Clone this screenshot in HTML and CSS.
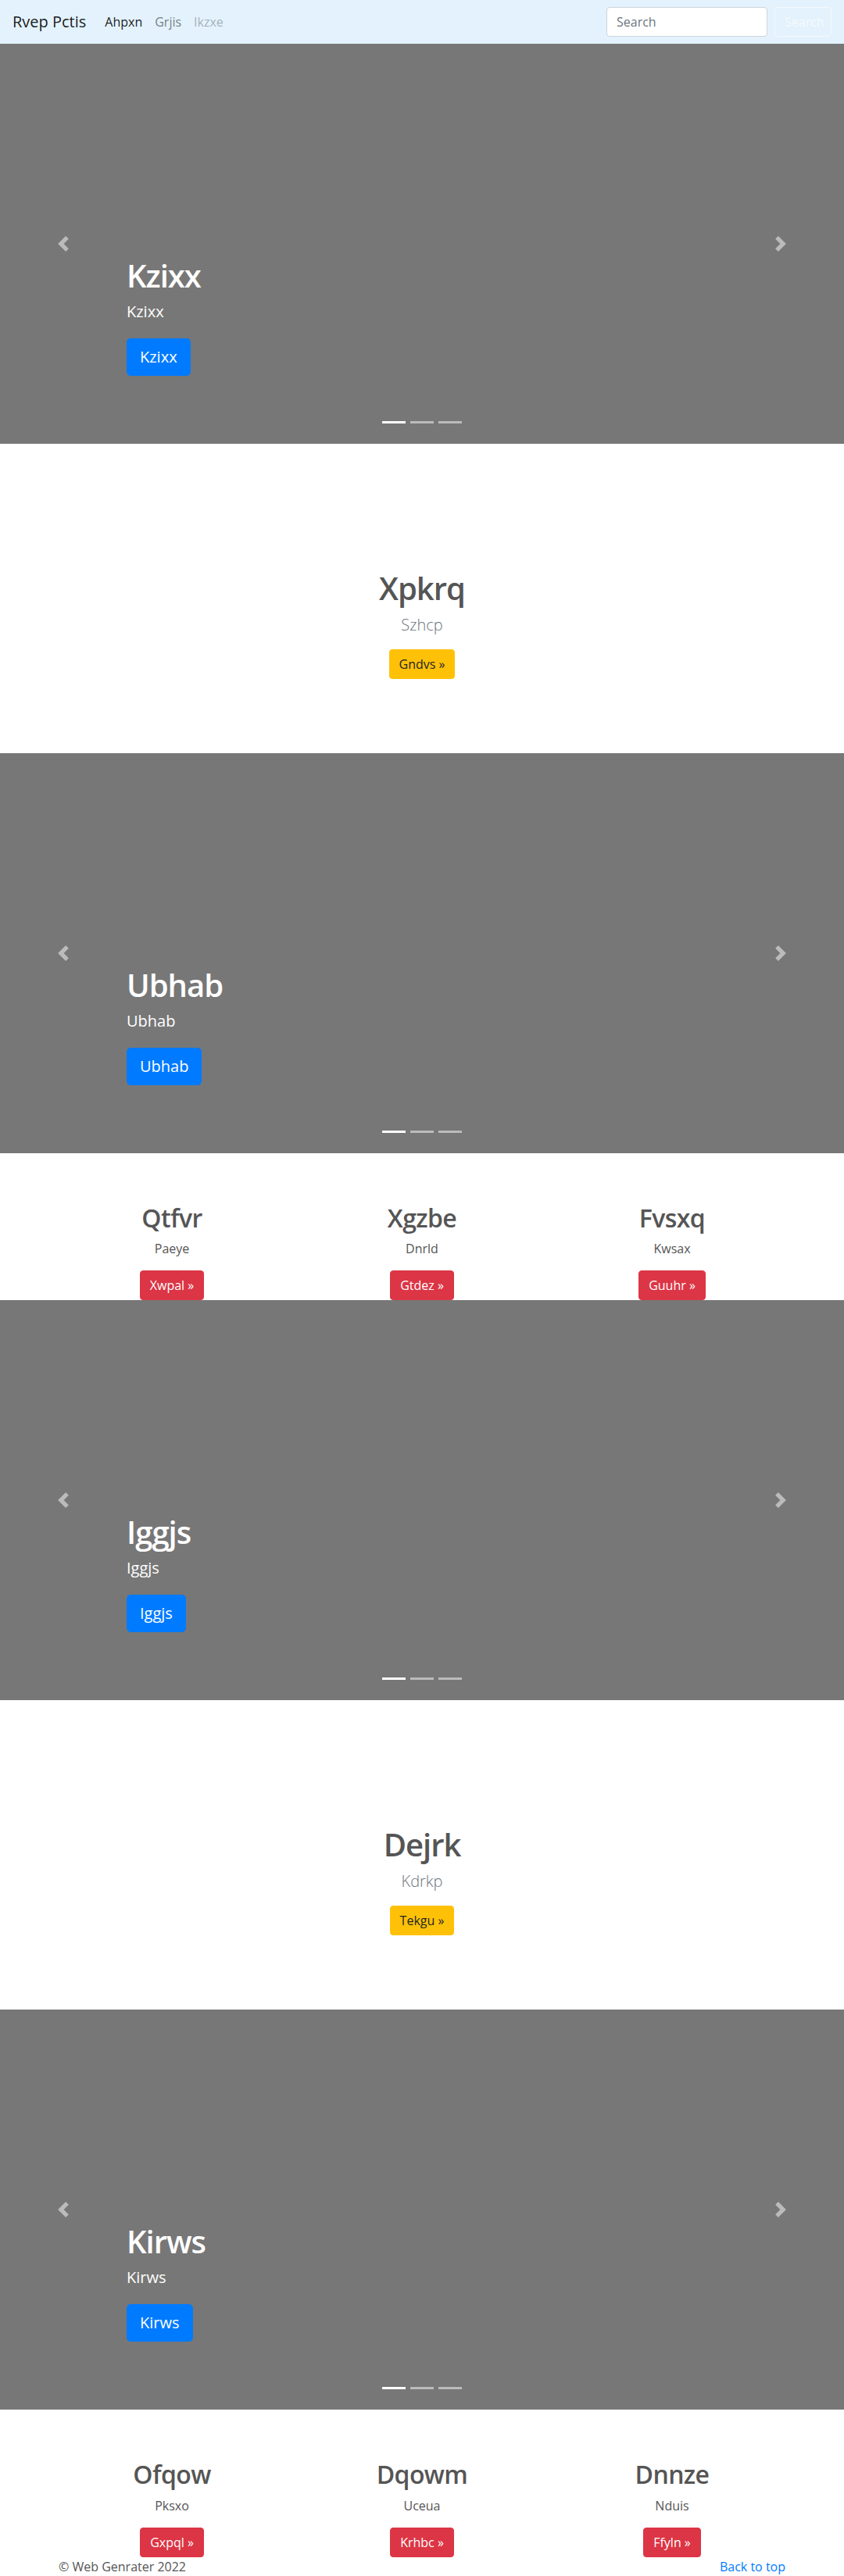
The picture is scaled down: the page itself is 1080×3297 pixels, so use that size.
FILE: index.html
```html
<!DOCTYPE html>
<html lang="en">
<head>
<meta charset="utf-8">
<title>Rvep Pctis</title>
<link rel="stylesheet" href="styles.css">
</head>
<body>
<header class="navbar">
  <a class="brand" href="#">Rvep Pctis</a>
  <ul class="nav">
    <li><a class="nav-link active" href="#">Ahpxn</a></li>
    <li><a class="nav-link" href="#">Grjis</a></li>
    <li><a class="nav-link disabled" href="#">Ikzxe</a></li>
  </ul>
  <form class="search">
    <input type="text" placeholder="Search">
    <button type="button">Search</button>
  </form>
</header>

<main>
  <section class="carousel">
    <div class="caption">
      <h1>Kzixx</h1>
      <p>Kzixx</p>
      <p class="cta"><a class="btn btn-lg btn-primary" href="#">Kzixx</a></p>
    </div>
    <ol class="indicators"><li class="active"></li><li></li><li></li></ol>
    <a class="ctrl prev" href="#"><svg viewBox="0 0 8 8" width="20" height="20"><path d="M5.25 0l-4 4 4 4 1.5-1.5L4.25 4l2.5-2.5L5.25 0z"/></svg></a>
    <a class="ctrl next" href="#"><svg viewBox="0 0 8 8" width="20" height="20"><path d="M2.75 0l-1.5 1.5L3.75 4l-2.5 2.5L2.75 8l4-4-4-4z"/></svg></a>
  </section>

  <section class="feature">
    <h1>Xpkrq</h1>
    <p class="lead">Szhcp</p>
    <p class="cta"><a class="btn btn-warning" href="#">Gndvs &raquo;</a></p>
  </section>

  <section class="carousel">
    <div class="caption">
      <h1>Ubhab</h1>
      <p>Ubhab</p>
      <p class="cta"><a class="btn btn-lg btn-primary" href="#">Ubhab</a></p>
    </div>
    <ol class="indicators"><li class="active"></li><li></li><li></li></ol>
    <a class="ctrl prev" href="#"><svg viewBox="0 0 8 8" width="20" height="20"><path d="M5.25 0l-4 4 4 4 1.5-1.5L4.25 4l2.5-2.5L5.25 0z"/></svg></a>
    <a class="ctrl next" href="#"><svg viewBox="0 0 8 8" width="20" height="20"><path d="M2.75 0l-1.5 1.5L3.75 4l-2.5 2.5L2.75 8l4-4-4-4z"/></svg></a>
  </section>

  <section class="columns">
    <div class="col">
      <h2>Qtfvr</h2>
      <p>Paeye</p>
      <p class="cta"><a class="btn btn-danger" href="#">Xwpal &raquo;</a></p>
    </div>
    <div class="col">
      <h2>Xgzbe</h2>
      <p>Dnrld</p>
      <p class="cta"><a class="btn btn-danger" href="#">Gtdez &raquo;</a></p>
    </div>
    <div class="col">
      <h2>Fvsxq</h2>
      <p>Kwsax</p>
      <p class="cta"><a class="btn btn-danger" href="#">Guuhr &raquo;</a></p>
    </div>
  </section>

  <section class="carousel">
    <div class="caption">
      <h1>Iggjs</h1>
      <p>Iggjs</p>
      <p class="cta"><a class="btn btn-lg btn-primary" href="#">Iggjs</a></p>
    </div>
    <ol class="indicators"><li class="active"></li><li></li><li></li></ol>
    <a class="ctrl prev" href="#"><svg viewBox="0 0 8 8" width="20" height="20"><path d="M5.25 0l-4 4 4 4 1.5-1.5L4.25 4l2.5-2.5L5.25 0z"/></svg></a>
    <a class="ctrl next" href="#"><svg viewBox="0 0 8 8" width="20" height="20"><path d="M2.75 0l-1.5 1.5L3.75 4l-2.5 2.5L2.75 8l4-4-4-4z"/></svg></a>
  </section>

  <section class="feature">
    <h1>Dejrk</h1>
    <p class="lead">Kdrkp</p>
    <p class="cta"><a class="btn btn-warning" href="#">Tekgu &raquo;</a></p>
  </section>

  <section class="carousel">
    <div class="caption">
      <h1>Kirws</h1>
      <p>Kirws</p>
      <p class="cta"><a class="btn btn-lg btn-primary" href="#">Kirws</a></p>
    </div>
    <ol class="indicators"><li class="active"></li><li></li><li></li></ol>
    <a class="ctrl prev" href="#"><svg viewBox="0 0 8 8" width="20" height="20"><path d="M5.25 0l-4 4 4 4 1.5-1.5L4.25 4l2.5-2.5L5.25 0z"/></svg></a>
    <a class="ctrl next" href="#"><svg viewBox="0 0 8 8" width="20" height="20"><path d="M2.75 0l-1.5 1.5L3.75 4l-2.5 2.5L2.75 8l4-4-4-4z"/></svg></a>
  </section>

  <section class="columns">
    <div class="col">
      <h2>Ofqow</h2>
      <p>Pksxo</p>
      <p class="cta"><a class="btn btn-danger" href="#">Gxpql &raquo;</a></p>
    </div>
    <div class="col">
      <h2>Dqowm</h2>
      <p>Uceua</p>
      <p class="cta"><a class="btn btn-danger" href="#">Krhbc &raquo;</a></p>
    </div>
    <div class="col">
      <h2>Dnnze</h2>
      <p>Nduis</p>
      <p class="cta"><a class="btn btn-danger" href="#">Ffyln &raquo;</a></p>
    </div>
  </section>
</main>

<footer class="footer">
  <p>&copy; Web Genrater 2022</p>
  <p><a href="#">Back to top</a></p>
</footer>
</body>
</html>
```

FILE: styles.css
```css
* { box-sizing: border-box; }

html, body { margin: 0; padding: 0; }

body {
  font-family: "Open Sans", "Noto Sans", sans-serif;
  font-size: 16px;
  line-height: 1.5;
  color: #212529;
  background: #fff;
}

a { text-decoration: none; }

/* navbar */
.navbar {
  height: 56px;
  background: #e3f2fd;
  display: flex;
  align-items: center;
  padding: 0 16px;
}
.brand {
  font-size: 20px;
  line-height: 30px;
  color: rgba(0, 0, 0, .9);
  margin-right: 16px;
}
.nav {
  display: flex;
  list-style: none;
  margin: 0;
  padding: 0;
  flex: 1;
}
.nav-link {
  display: block;
  padding: 8px;
  color: rgba(0, 0, 0, .5);
}
.nav-link.active { color: rgba(0, 0, 0, .9); }
.nav-link.disabled { color: rgba(0, 0, 0, .3); }

.search { display: flex; align-items: center; gap: 9px; margin: 0; }
.search input {
  width: 206px;
  height: 38px;
  padding: 6px 12px;
  border: 1px solid #ced4da;
  border-radius: 4px;
  font: inherit;
  color: #495057;
  background: #fff;
}
.search input::placeholder { color: #6c757d; }
.search button {
  width: 73px;
  height: 38px;
  padding: 6px 12px;
  border: 1px solid rgba(248, 249, 250, .9);
  border-radius: 4px;
  background: transparent;
  color: #f8f9fa;
  font: inherit;
}

/* carousel */
.carousel {
  position: relative;
  height: 512px;
  background: #777;
  color: #fff;
  display: flex;
  flex-direction: column;
  justify-content: flex-end;
  padding: 0 162px 87px 162px;
}
.caption h1 {
  font-size: 40px;
  font-weight: 600;
  line-height: 1.2;
  letter-spacing: -1px;
  margin: 0 0 8px;
}
.caption p {
  font-size: 20px;
  line-height: 1.4;
  margin: 0 0 20px;
}
.caption p.cta { margin: 0; }

.btn {
  display: inline-block;
  border: 1px solid transparent;
  border-radius: 4px;
  padding: 6px 12px;
  font-size: 16px;
  line-height: 24px;
  text-align: center;
}
.btn-lg {
  padding: 8px 16px;
  font-size: 20px;
  line-height: 30px;
  border-radius: 5px;
}
.btn-primary { background: #007bff; border-color: #007bff; color: #fff; }
.btn-warning { background: #ffc107; border-color: #ffc107; color: #212529; }
.btn-danger { background: #dc3545; border-color: #dc3545; color: #fff; }

.indicators {
  position: absolute;
  left: 0;
  right: 0;
  bottom: 26px;
  margin: 0;
  padding: 0;
  list-style: none;
  display: flex;
  justify-content: center;
  gap: 6px;
}
.indicators li {
  width: 30px;
  height: 3px;
  background: #fff;
  opacity: .5;
}
.indicators li.active { opacity: 1; }

.ctrl {
  position: absolute;
  top: 0;
  bottom: 0;
  width: 15%;
  display: flex;
  align-items: center;
  justify-content: center;
  opacity: .5;
}
.ctrl svg { fill: #fff; display: block; }
.ctrl.prev { left: 0; }
.ctrl.next { right: 0; }

/* featurette */
.feature {
  height: 396px;
  padding-top: 161px;
  text-align: center;
}
.feature h1 {
  font-size: 40px;
  font-weight: 600;
  line-height: 1.2;
  letter-spacing: -1px;
  color: #555;
  margin: 0 0 8px;
}
.feature .lead {
  font-size: 20px;
  font-weight: 300;
  line-height: 30px;
  color: #6c757d;
  margin: 0 0 16px;
}
.feature .cta { margin: 0; }

/* columns */
.columns {
  width: 960px;
  margin: 0 auto;
  padding-top: 64px;
  display: grid;
  grid-template-columns: repeat(3, 1fr);
}
.col { padding: 0 15px; text-align: center; }
.col h2 {
  font-size: 32px;
  font-weight: 600;
  line-height: 1.2;
  letter-spacing: -0.6px;
  color: #555;
  margin: 0 0 8px;
}
.col p {
  margin: 0 0 16px;
  color: #555;
}
.col p.cta { margin: 0; }

/* footer */
.footer {
  width: 960px;
  margin: 0 auto;
  padding: 0 15px;
  display: flex;
  justify-content: space-between;
  line-height: 24px;
  color: #555;
}
.footer p { margin: 0; }
.footer a { color: #007bff; }
```
